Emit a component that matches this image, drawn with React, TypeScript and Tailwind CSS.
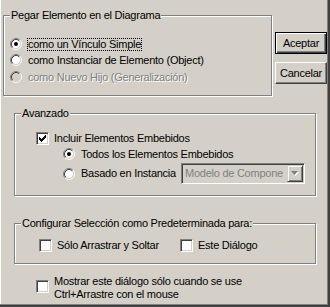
import React from "react";

// clasico radio de Windows 2000 (12x12)
function Radio({ checked = false, disabled = false }: { checked?: boolean; disabled?: boolean }) {
  return (
    <svg width="12" height="12" viewBox="0 0 12 12" className="shrink-0">
      <circle cx="6" cy="6" r="4.5" fill={disabled ? "#d4d0c8" : "#ffffff"} />
      <path d="M2.11 9.89 A5.5 5.5 0 0 1 9.89 2.11" fill="none" stroke="#808080" strokeWidth="1" />
      <path d="M9.89 2.11 A5.5 5.5 0 0 1 2.11 9.89" fill="none" stroke="#ffffff" strokeWidth="1" />
      <path d="M2.82 9.18 A4.5 4.5 0 0 1 9.18 2.82" fill="none" stroke="#404040" strokeWidth="1" />
      <path d="M9.18 2.82 A4.5 4.5 0 0 1 2.82 9.18" fill="none" stroke="#d4d0c8" strokeWidth="1" />
      {checked ? <circle cx="6" cy="6" r="2" fill="#000000" /> : null}
    </svg>
  );
}

function Check({ checked = false }: { checked?: boolean }) {
  return (
    <span className="shrink-0 block w-[13px] h-[13px] bg-white border border-t-[#808080] border-l-[#808080] border-b-white border-r-white shadow-[inset_1px_1px_0_#404040,inset_-1px_-1px_0_#d4d0c8] p-[2px]">
      {checked ? (
        <svg width="7" height="7" viewBox="0 0 7 7" className="block">
          <path
            d="M0 2h1v3H0z M1 3h1v3H1z M2 4h1v3H2z M3 3h1v3H3z M4 2h1v3H4z M5 1h1v3H5z M6 0h1v3H6z"
            fill="#000"
          />
        </svg>
      ) : null}
    </span>
  );
}

function Group({
  label,
  className,
  children,
}: {
  label: string;
  className: string;
  children: React.ReactNode;
}) {
  return (
    <div
      className={`relative shrink-0 border border-[#808080] shadow-[inset_1px_1px_0_#fff,1px_1px_0_#fff] ${className}`}
    >
      <span className="absolute top-[-7px] left-[6px] px-[1px] bg-[#d4d0c8] leading-[13px] whitespace-nowrap">
        {label}
      </span>
      {children}
    </div>
  );
}

function Button({ label, isDefault = false }: { label: string; isDefault?: boolean }) {
  return (
    <button
      type="button"
      className={
        isDefault
          ? "w-[52px] h-[22px] flex items-center justify-center border border-black bg-[#d4d0c8] shadow-[inset_1px_1px_0_#fff,inset_-1px_-1px_0_#404040,inset_-2px_-2px_0_#808080] leading-[13px]"
          : "w-[52px] h-[22px] flex items-center justify-center border border-t-white border-l-white border-b-[#404040] border-r-[#404040] bg-[#d4d0c8] shadow-[inset_-1px_-1px_0_#808080] leading-[13px]"
      }
    >
      {label}
    </button>
  );
}

export default function App() {
  return (
    <div className="w-[330px] h-[307px] overflow-hidden bg-[#d4d0c8] shadow-[inset_-2px_-2px_0_#404040,inset_-3px_-3px_0_#808080,inset_1px_0_0_#fff] pl-[3px] pt-[15px] flex flex-col items-start text-[11px] tracking-[-0.25px] text-black font-['Liberation_Sans',Arial,sans-serif]">
      {/* Pegar + botones */}
      <div className="flex items-start">
        <Group label="Pegar Elemento en el Diagrama" className="w-[269px] h-[81px]">
          <div className="flex flex-col pt-[20px] pl-[6px]">
            <div className="flex items-center h-[16px]">
              <Radio checked />
              <span className="ml-[5px] border border-dotted border-black leading-[11px]">
                como un Vínculo Simple
              </span>
            </div>
            <div className="flex items-center h-[16px]">
              <Radio />
              <span className="ml-[5px] border border-transparent leading-[11px]">
                como Instanciar de Elemento (Object)
              </span>
            </div>
            <div className="flex items-center h-[16px] mt-[1px]">
              <Radio disabled />
              <span className="ml-[5px] border border-transparent leading-[11px] text-[#808080] [text-shadow:1px_1px_0_#fff]">
                como Nuevo Hijo (Generalización)
              </span>
            </div>
          </div>
        </Group>
        <div className="ml-[3px] mt-[17px] flex flex-col gap-[8px]">
          <Button label="Aceptar" isDefault />
          <Button label="Cancelar" />
        </div>
      </div>

      {/* Avanzado */}
      <Group label="Avanzado" className="ml-[11px] mt-[17px] w-[302px] h-[83px]">
        <div className="flex flex-col pt-[16px] pl-[21px]">
          <div className="flex items-center h-[16px]">
            <Check checked />
            <span className="ml-[5px] leading-[13px]">Incluir Elementos Embebidos</span>
          </div>
          <div className="flex items-center h-[16px] ml-[27px]">
            <Radio checked />
            <span className="ml-[6px] leading-[13px]">Todos los Elementos Embebidos</span>
          </div>
          <div className="flex items-center h-[21px] ml-[27px] mt-[1px]">
            <Radio />
            <span className="ml-[6px] w-[100px] leading-[13px] whitespace-nowrap">Basado en Instancia</span>
            <div className="w-[124px] h-[21px] flex p-[1px] bg-[#d4d0c8] border border-t-[#808080] border-l-[#808080] border-b-white border-r-white shadow-[inset_1px_1px_0_#404040,inset_-1px_-1px_0_#d4d0c8]">
              <span className="flex-1 pl-[2px] flex items-center leading-[13px] text-[#808080] whitespace-nowrap overflow-hidden">
                Modelo de Compone
              </span>
              <span className="w-[16px] h-full flex items-center justify-center border border-t-[#d4d0c8] border-l-[#d4d0c8] border-b-[#404040] border-r-[#404040] shadow-[inset_1px_1px_0_#fff,inset_-1px_-1px_0_#808080]">
                <svg width="8" height="5" viewBox="0 0 8 5" className="block">
                  <path d="M1 1h7l-3.5 4z" fill="#ffffff" />
                  <path d="M0 0h7l-3.5 4z" fill="#808080" />
                </svg>
              </span>
            </div>
          </div>
        </div>
      </Group>

      {/* Configurar */}
      <Group
        label="Configurar Selección como Predeterminada para:"
        className="ml-[11px] mt-[27px] w-[302px] h-[41px]"
      >
        <div className="flex items-center h-[16px] mt-[13px] ml-[24px]">
          <div className="flex items-center w-[141px]">
            <Check />
            <span className="ml-[5px] leading-[13px]">Sólo Arrastrar y Soltar</span>
          </div>
          <div className="flex items-center">
            <Check />
            <span className="ml-[5px] leading-[13px]">Este Diálogo</span>
          </div>
        </div>
      </Group>

      {/* Mostrar dialogo */}
      <div className="flex items-start ml-[33px] mt-[11px]">
        <span className="mt-[5px]">
          <Check />
        </span>
        <span className="ml-[5px] leading-[13px]">
          Mostrar este diálogo sólo cuando se use
          <br />
          Ctrl+Arrastre con el mouse
        </span>
      </div>
    </div>
  );
}
